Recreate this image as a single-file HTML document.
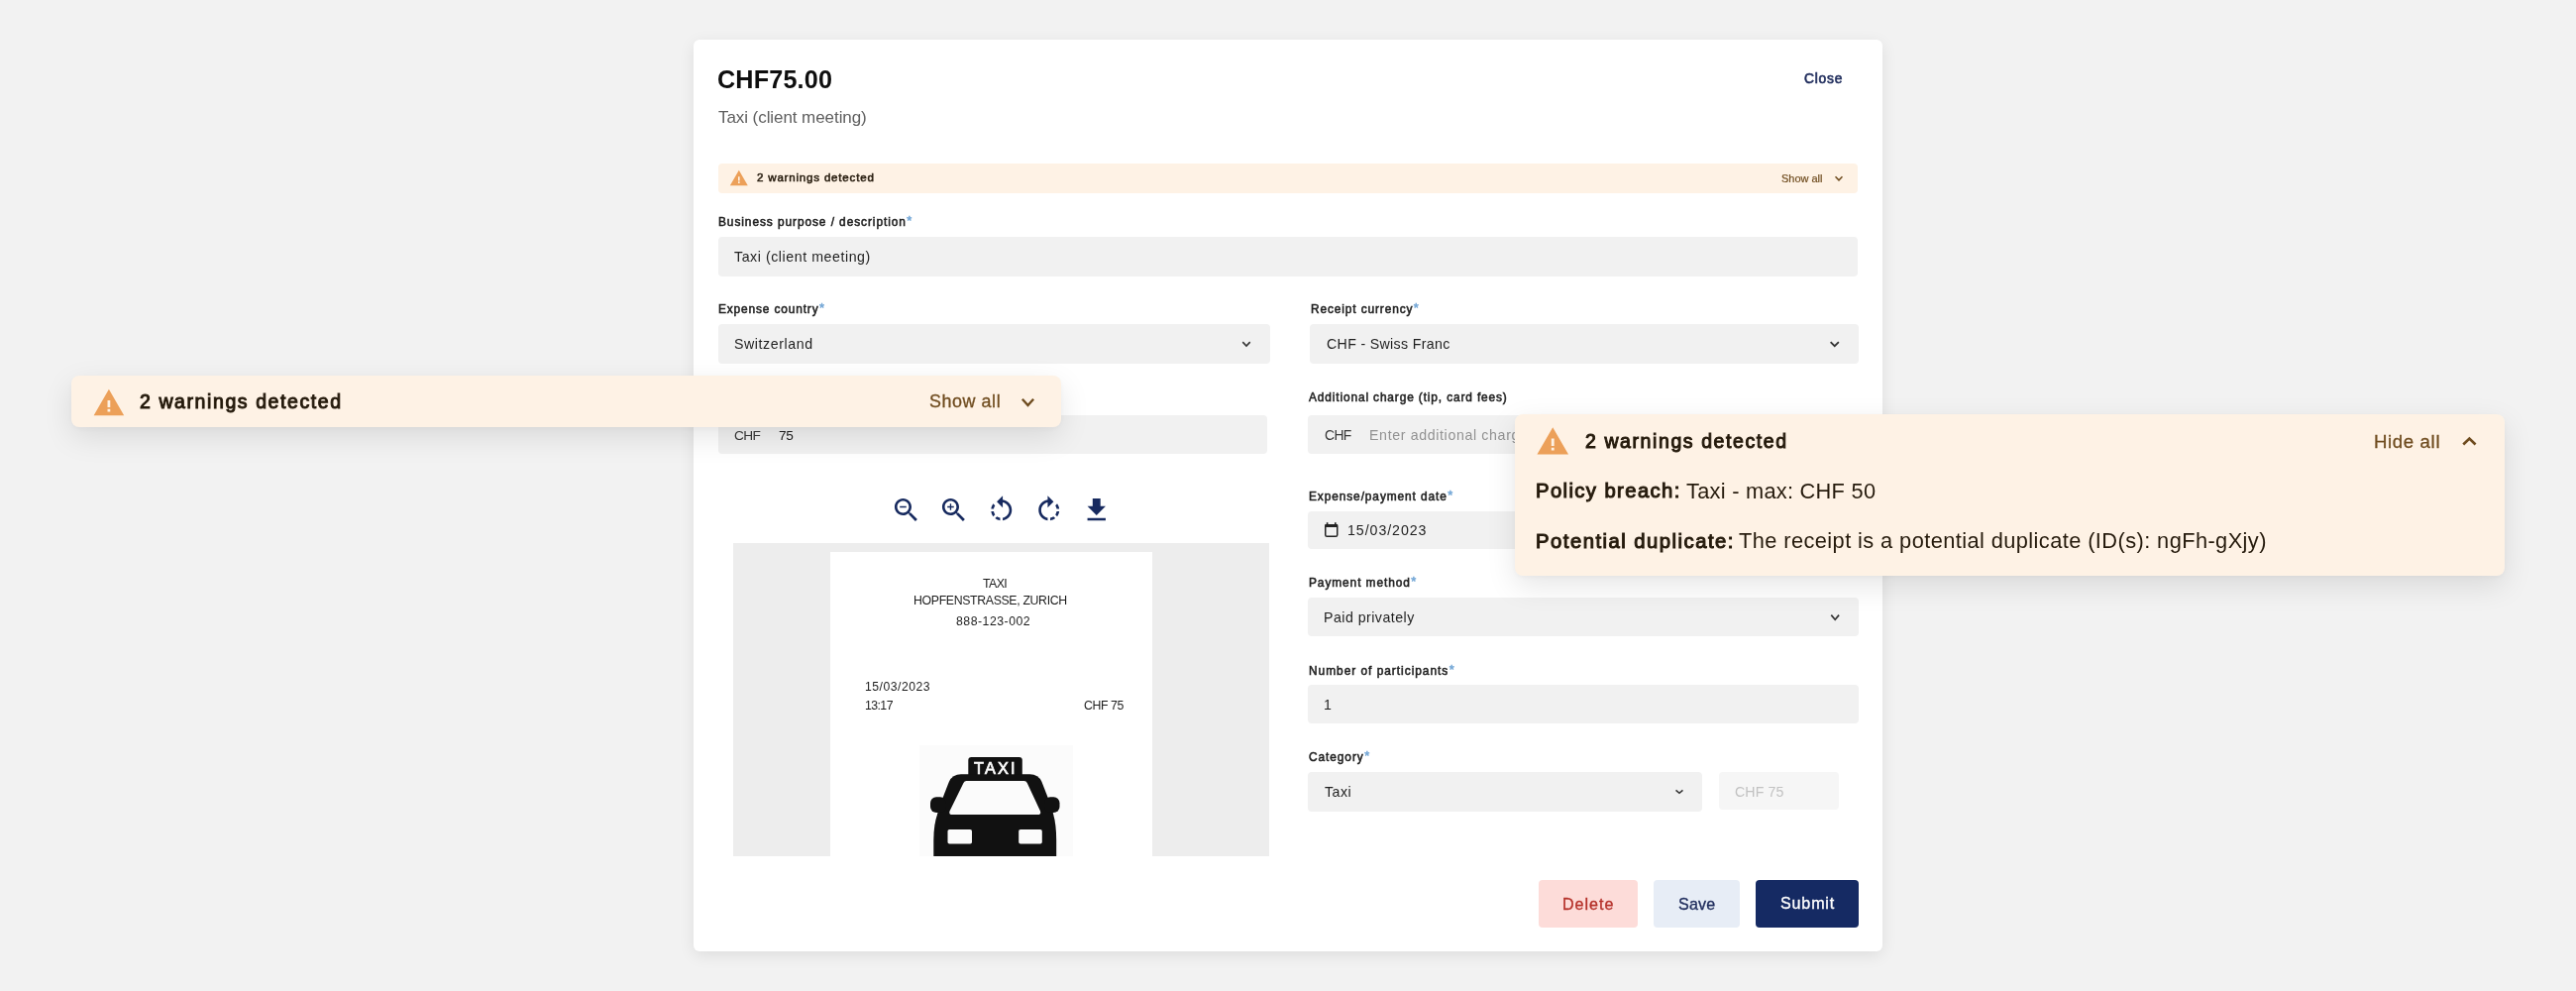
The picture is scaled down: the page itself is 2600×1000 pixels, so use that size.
<!DOCTYPE html>
<html><head><meta charset="utf-8"><style>
html,body{margin:0;padding:0;}
body{width:2600px;height:1000px;background:#f2f2f2;position:relative;overflow:hidden;font-family:"Liberation Sans",sans-serif;}
.t{position:absolute;white-space:nowrap;will-change:transform;}
.r{position:absolute;}
</style></head><body>
<div class="r" style="left:700px;top:40px;width:1200px;height:920px;background:#fff;border-radius:6px;box-shadow:0 4px 16px rgba(0,0,0,0.09)"></div>
<div class="t" style="left:724.00px;top:68.00px;font-size:25.2px;line-height:25.2px;font-weight:700;color:#0e0e0e;letter-spacing:0.157px;">CHF75.00</div>
<div class="t" style="left:725.00px;top:110.00px;font-size:17px;line-height:17px;color:#606060;letter-spacing:-0.07px;">Taxi (client meeting)</div>
<div class="t" style="left:1821.00px;top:73.00px;font-size:13.8px;line-height:13.8px;color:#1f2c5c;letter-spacing:0.77px;-webkit-text-stroke:0.62px #1f2c5c;">Close</div>
<div class="r" style="left:725px;top:164.5px;width:1150.00px;height:30.00px;background:#fef2e5;border-radius:4px;"></div>
<svg class="r" style="left:736.18px;top:170.37px;" width="19.64" height="19.58" viewBox="0 0 24 24"><path d="M1 21h22L12 2 1 21zm12-2.7h-2v-2h2v2zm0-3.1h-2v-5.2h2v5.2z" fill="#eca059"/></svg>
<div class="t" style="left:764.00px;top:173.00px;font-size:11.6px;line-height:11.6px;color:#251a0c;letter-spacing:0.782px;-webkit-text-stroke:0.52px #251a0c;">2 warnings detected</div>
<div class="t" style="left:1798.00px;top:175.00px;font-size:11px;line-height:11px;color:#6f4c1f;letter-spacing:-0.029px;-webkit-text-stroke:0.2px #6f4c1f;">Show all</div>
<svg class="r" style="left:0;top:0;overflow:visible" width="1" height="1"><polyline points="1852.53,178.23 1856.00,181.86 1859.47,178.23" fill="none" stroke="#6f4c1f" stroke-width="1.48" stroke-linejoin="miter" stroke-linecap="butt"/></svg>
<div class="t" style="left:725.00px;top:217.00px;font-size:11.9px;line-height:11.9px;color:#222222;letter-spacing:0.93px;-webkit-text-stroke:0.54px #222222;">Business purpose / description<span style="color:#74a7d6;-webkit-text-stroke:0.5px #74a7d6;letter-spacing:0;font-size:13px;vertical-align:1px;margin-left:0.5px">*</span></div>
<div class="r" style="left:725px;top:239px;width:1150.00px;height:39.50px;background:#f1f1f1;border-radius:4px;"></div>
<div class="t" style="left:741.00px;top:252.00px;font-size:14.2px;line-height:14.2px;color:#1f1f1f;letter-spacing:0.555px;">Taxi (client meeting)</div>
<div class="t" style="left:725.00px;top:305.00px;font-size:11.9px;line-height:11.9px;color:#222222;letter-spacing:0.861px;-webkit-text-stroke:0.54px #222222;">Expense country<span style="color:#74a7d6;-webkit-text-stroke:0.5px #74a7d6;letter-spacing:0;font-size:13px;vertical-align:1px;margin-left:0.5px">*</span></div>
<div class="r" style="left:725px;top:327px;width:556.50px;height:39.50px;background:#f1f1f1;border-radius:4px;"></div>
<div class="t" style="left:741.00px;top:340.00px;font-size:14.2px;line-height:14.2px;color:#1f1f1f;letter-spacing:0.58px;">Switzerland</div>
<svg class="r" style="left:0;top:0;overflow:visible" width="1" height="1"><polyline points="1254.27,345.17 1258.00,349.01 1261.73,345.17" fill="none" stroke="#333" stroke-width="1.59" stroke-linejoin="miter" stroke-linecap="butt"/></svg>
<div class="t" style="left:1323.00px;top:305.00px;font-size:11.9px;line-height:11.9px;color:#222222;letter-spacing:0.884px;-webkit-text-stroke:0.54px #222222;">Receipt currency<span style="color:#74a7d6;-webkit-text-stroke:0.5px #74a7d6;letter-spacing:0;font-size:13px;vertical-align:1px;margin-left:0.5px">*</span></div>
<div class="r" style="left:1322.3px;top:327px;width:553.70px;height:39.50px;background:#f1f1f1;border-radius:4px;"></div>
<div class="t" style="left:1339.00px;top:340.00px;font-size:14.2px;line-height:14.2px;color:#1f1f1f;letter-spacing:0.331px;">CHF - Swiss Franc</div>
<svg class="r" style="left:0;top:0;overflow:visible" width="1" height="1"><polyline points="1847.63,345.03 1851.75,349.24 1855.87,345.03" fill="none" stroke="#333" stroke-width="1.76" stroke-linejoin="miter" stroke-linecap="butt"/></svg>
<div class="r" style="left:725px;top:419.3px;width:553.60px;height:38.50px;background:#f1f1f1;border-radius:4px;"></div>
<div class="t" style="left:741.00px;top:433.00px;font-size:13.7px;line-height:13.7px;color:#383838;letter-spacing:-0.6px;">CHF</div>
<div class="t" style="left:786.00px;top:433.00px;font-size:13.7px;line-height:13.7px;color:#1f1f1f;letter-spacing:-0.3px;">75</div>
<div class="t" style="left:1321.00px;top:396.00px;font-size:11.9px;line-height:11.9px;color:#222222;letter-spacing:0.868px;-webkit-text-stroke:0.54px #222222;">Additional charge (tip, card fees)</div>
<div class="r" style="left:1320px;top:419.4px;width:556.00px;height:38.20px;background:#f1f1f1;border-radius:4px;"></div>
<div class="t" style="left:1337.00px;top:433.00px;font-size:13.9px;line-height:13.9px;color:#383838;letter-spacing:-0.6px;">CHF</div>
<div class="t" style="left:1382.00px;top:432.00px;font-size:14.2px;line-height:14.2px;color:#929292;letter-spacing:0.636px;">Enter additional charge</div>
<div class="t" style="left:1321.00px;top:494.00px;font-size:11.9px;line-height:11.9px;color:#222222;letter-spacing:0.908px;-webkit-text-stroke:0.54px #222222;">Expense/payment date<span style="color:#74a7d6;-webkit-text-stroke:0.5px #74a7d6;letter-spacing:0;font-size:13px;vertical-align:1px;margin-left:0.5px">*</span></div>
<div class="r" style="left:1320px;top:515.7px;width:556.00px;height:37.90px;background:#f1f1f1;border-radius:4px;"></div>
<svg class="r" style="left:1336.40px;top:526.80px;" width="16.00" height="16.00" viewBox="0 0 16 16"><rect x="1.75" y="2.85" width="12" height="11.4" rx="1.6" fill="none" stroke="#222" stroke-width="1.5"/><rect x="1.2" y="2.1" width="13.1" height="2.8" rx="0.8" fill="#222"/><rect x="2.8" y="0.2" width="1.6" height="2.4" fill="#222"/><rect x="11.0" y="0.2" width="1.6" height="2.4" fill="#222"/></svg>
<div class="t" style="left:1360.00px;top:528.00px;font-size:14.2px;line-height:14.2px;color:#1f1f1f;letter-spacing:0.944px;">15/03/2023</div>
<div class="t" style="left:1321.00px;top:581.00px;font-size:11.9px;line-height:11.9px;color:#222222;letter-spacing:0.92px;-webkit-text-stroke:0.54px #222222;">Payment method<span style="color:#74a7d6;-webkit-text-stroke:0.5px #74a7d6;letter-spacing:0;font-size:13px;vertical-align:1px;margin-left:0.5px">*</span></div>
<div class="r" style="left:1320px;top:603.3px;width:556.40px;height:38.50px;background:#f1f1f1;border-radius:4px;"></div>
<div class="t" style="left:1336.00px;top:616.00px;font-size:14.2px;line-height:14.2px;color:#1f1f1f;letter-spacing:0.469px;">Paid privately</div>
<svg class="r" style="left:0;top:0;overflow:visible" width="1" height="1"><polyline points="1848.30,620.60 1852.20,625.18 1856.10,620.60" fill="none" stroke="#333" stroke-width="1.67" stroke-linejoin="miter" stroke-linecap="butt"/></svg>
<div class="t" style="left:1321.00px;top:670.00px;font-size:11.9px;line-height:11.9px;color:#222222;letter-spacing:0.984px;-webkit-text-stroke:0.54px #222222;">Number of participants<span style="color:#74a7d6;-webkit-text-stroke:0.5px #74a7d6;letter-spacing:0;font-size:13px;vertical-align:1px;margin-left:0.5px">*</span></div>
<div class="r" style="left:1320px;top:691.2px;width:556.40px;height:39.00px;background:#f1f1f1;border-radius:4px;"></div>
<div class="t" style="left:1336.00px;top:704.00px;font-size:14.2px;line-height:14.2px;color:#1f1f1f;">1</div>
<div class="t" style="left:1321.00px;top:757.00px;font-size:11.9px;line-height:11.9px;color:#222222;letter-spacing:0.923px;-webkit-text-stroke:0.54px #222222;">Category<span style="color:#74a7d6;-webkit-text-stroke:0.5px #74a7d6;letter-spacing:0;font-size:13px;vertical-align:1px;margin-left:0.5px">*</span></div>
<div class="r" style="left:1320px;top:779.2px;width:398.20px;height:39.80px;background:#f1f1f1;border-radius:4px;"></div>
<div class="t" style="left:1337.00px;top:792.00px;font-size:14.2px;line-height:14.2px;color:#1f1f1f;letter-spacing:0.5px;">Taxi</div>
<svg class="r" style="left:0;top:0;overflow:visible" width="1" height="1"><polyline points="1691.53,797.33 1695.00,800.36 1698.47,797.33" fill="none" stroke="#333" stroke-width="1.48" stroke-linejoin="miter" stroke-linecap="butt"/></svg>
<div class="r" style="left:1735px;top:779.1px;width:121.00px;height:38.40px;background:#f6f6f6;border-radius:4px;"></div>
<div class="t" style="left:1751.00px;top:792.00px;font-size:14.2px;line-height:14.2px;color:#c2c2c2;letter-spacing:0.1px;">CHF 75</div>
<div class="r" style="left:1553.3px;top:888.2px;width:99.60px;height:47.50px;background:#fddcd9;border-radius:4px;"></div>
<div class="t" style="left:1577.00px;top:904.00px;font-size:16.1px;line-height:16.1px;color:#b5312a;letter-spacing:0.99px;-webkit-text-stroke:0.35px #b5312a;">Delete</div>
<div class="r" style="left:1669.3px;top:888.2px;width:86.60px;height:47.50px;background:#e7edf6;border-radius:4px;"></div>
<div class="t" style="left:1694.00px;top:904.00px;font-size:16.1px;line-height:16.1px;color:#1f2c5c;letter-spacing:0.15px;-webkit-text-stroke:0.35px #1f2c5c;">Save</div>
<div class="r" style="left:1772px;top:888.2px;width:103.80px;height:47.50px;background:#152a63;border-radius:4px;"></div>
<div class="t" style="left:1797.00px;top:903.00px;font-size:16.1px;line-height:16.1px;color:#ffffff;letter-spacing:0.83px;-webkit-text-stroke:0.35px #ffffff;">Submit</div>
<svg class="r" style="left:898.80px;top:499.00px;" width="31.50" height="31.50" viewBox="0 0 24 24"><path d="M15.5 14h-.79l-.28-.27C15.41 12.59 16 11.11 16 9.5 16 5.91 13.09 3 9.5 3S3 5.91 3 9.5 5.91 16 9.5 16c1.61 0 3.09-.59 4.23-1.57l.27.28v.79l5 4.99L20.49 19l-4.99-5zm-6 0C7.01 14 5 11.990 5 9.5S7.01 5 9.5 5 14 7.01 14 9.5 11.99 14 9.5 14zM7 9h5v1H7z" fill="#172a5f"/></svg>
<svg class="r" style="left:946.80px;top:499.00px;" width="31.50" height="31.50" viewBox="0 0 24 24"><path d="M15.5 14h-.79l-.28-.27C15.41 12.59 16 11.11 16 9.5 16 5.91 13.09 3 9.5 3S3 5.91 3 9.5 5.91 16 9.5 16c1.61 0 3.09-.59 4.23-1.57l.27.28v.79l5 4.99L20.49 19l-4.99-5zm-6 0C7.01 14 5 11.99 5 9.5S7.01 5 9.5 5 14 7.01 14 9.5 11.99 14 9.5 14zm2.5-4h-2v2H9v-2H7V9h2V7h1v2h2v1z" fill="#172a5f"/></svg>
<svg class="r" style="left:994.80px;top:499.00px;" width="31.50" height="31.50" viewBox="0 0 24 24"><path d="M7.11 8.53L5.7 7.11C4.8 8.27 4.24 9.61 4.07 11h2.02c.14-.87.49-1.72 1.02-2.47zM6.09 13H4.07c.17 1.39.72 2.73 1.62 3.89l1.41-1.42c-.52-.75-.87-1.59-1.01-2.47zm1.01 5.32c1.16.9 2.51 1.44 3.9 1.61V17.9c-.87-.15-1.71-.49-2.46-1.03L7.1 18.32zM13 4.07V1L8.45 5.55 13 10V6.09c2.84.48 5 2.94 5 5.91s-2.16 5.43-5 5.91v2.02c3.95-.49 7-3.85 7-7.93s-3.05-7.44-7-7.93z" fill="#172a5f"/></svg>
<svg class="r" style="left:1042.80px;top:499.00px;" width="31.50" height="31.50" viewBox="0 0 24 24"><path d="M15.55 5.55L11 1v3.07C7.06 4.56 4 7.92 4 12s3.05 7.44 7 7.93v-2.02c-2.84-.48-5-2.94-5-5.91s2.16-5.43 5-5.91V10l4.55-4.45zM19.93 11c-.17-1.39-.72-2.73-1.62-3.89l-1.42 1.42c.54.75.88 1.6 1.02 2.47h2.02zM13 17.9v2.02c1.39-.17 2.74-.71 3.9-1.61l-1.44-1.44c-.75.54-1.59.89-2.46 1.03zm3.89-2.42l1.42 1.41c.9-1.16 1.45-2.5 1.62-3.89h-2.02c-.14.87-.48 1.72-1.02 2.48z" fill="#172a5f"/></svg>
<svg class="r" style="left:1090.80px;top:499.00px;" width="31.50" height="31.50" viewBox="0 0 24 24"><path d="M19 9h-4V3H9v6H5l7 7 7-7zM5 18v2h14v-2H5z" fill="#172a5f"/></svg>
<div class="r" style="left:739.5px;top:548px;width:541.00px;height:316.00px;background:#ededed;border-radius:0px;"></div>
<div class="r" style="left:838px;top:557.3px;width:325.00px;height:306.70px;background:#ffffff;border-radius:0px;"></div>
<div class="t" style="left:992.00px;top:583.00px;font-size:12.4px;line-height:12.4px;color:#1c1c1c;letter-spacing:-0.633px;">TAXI</div>
<div class="t" style="left:922.00px;top:600.00px;font-size:12.3px;line-height:12.3px;color:#1c1c1c;letter-spacing:-0.34px;">HOPFENSTRASSE, ZURICH</div>
<div class="t" style="left:965.00px;top:621.00px;font-size:12.3px;line-height:12.3px;color:#1c1c1c;letter-spacing:0.49px;">888-123-002</div>
<div class="t" style="left:873.00px;top:687.00px;font-size:12.2px;line-height:12.2px;color:#1c1c1c;letter-spacing:0.5px;">15/03/2023</div>
<div class="t" style="left:873.00px;top:706.00px;font-size:12.3px;line-height:12.3px;color:#1c1c1c;letter-spacing:-0.575px;">13:17</div>
<div class="t" style="left:1094.00px;top:706.00px;font-size:12.3px;line-height:12.3px;color:#1c1c1c;letter-spacing:-0.4px;">CHF 75</div>
<div class="r" style="left:928px;top:752px;width:155.00px;height:112.00px;background:#fbfbfb;border-radius:0px;"></div>
<svg class="r" style="left:0;top:0" width="2600" height="1000" viewBox="0 0 2600 1000">
<path fill="#111" d="M980.5 763.9 H1028.6 Q1031.8 763.9 1031.8 767.1 V782 H977.3 V767.1 Q977.3 763.9 980.5 763.9z"/>
<path fill="#111" d="M970 781.3 H1039.5 Q1048 781.3 1051.5 789 L1062 816 Q1063 819 1063 822 H946.3 Q946.3 819 947.3 816 L957.8 789 Q961.3 781.3 970 781.3z"/>
<path fill="#111" d="M946.3 821 H1063 Q1066.2 832 1066.2 848 V864 H942.3 V848 Q942.3 832 946.3 821z"/>
<rect x="939" y="804.3" width="16" height="15.7" rx="6" fill="#111"/>
<rect x="1054" y="804.3" width="15.5" height="15.7" rx="6" fill="#111"/>
<path fill="#fbfbfb" d="M975.5 787.9 H1033.7 Q1035.8 787.9 1036.7 790 L1050 818.5 Q1051 822 1047.5 822 H961 Q957.5 822 958.5 818.5 L972.5 790 Q973.4 787.9 975.5 787.9z"/>
<rect x="956.5" y="837" width="24.5" height="14.5" rx="1.8" fill="#fbfbfb"/>
<rect x="1028.2" y="837" width="23.6" height="14.5" rx="1.8" fill="#fbfbfb"/>
</svg>
<div class="t" style="left:983.00px;top:767.00px;font-size:16.3px;line-height:16.3px;color:#fbfbfb;letter-spacing:2.157px;-webkit-text-stroke:0.73px #fbfbfb;">TAXI</div>
<div class="r" style="left:71.5px;top:379px;width:999.00px;height:52.00px;background:#fef2e5;border-radius:8px;box-shadow:0 10px 30px rgba(0,0,0,0.10),0 2px 6px rgba(0,0,0,0.04);"></div>
<svg class="r" style="left:92.59px;top:389.52px;" width="33.82" height="33.35" viewBox="0 0 24 24"><path d="M1 21h22L12 2 1 21zm12-2.7h-2v-2h2v2zm0-3.1h-2v-5.2h2v5.2z" fill="#eca059"/></svg>
<div class="t" style="left:141.00px;top:396.00px;font-size:19.5px;line-height:19.5px;color:#251a0c;letter-spacing:1.584px;-webkit-text-stroke:0.98px #251a0c;">2 warnings detected</div>
<div class="t" style="left:938.00px;top:397.00px;font-size:17.9px;line-height:17.9px;color:#6f4c1f;letter-spacing:0.571px;-webkit-text-stroke:0.3px #6f4c1f;">Show all</div>
<svg class="r" style="left:0;top:0;overflow:visible" width="1" height="1"><polyline points="1031.87,402.77 1037.50,408.96 1043.13,402.77" fill="none" stroke="#6f4c1f" stroke-width="2.40" stroke-linejoin="miter" stroke-linecap="butt"/></svg>
<div class="r" style="left:1528.6px;top:418px;width:999.40px;height:163.00px;background:#fef2e5;border-radius:8px;box-shadow:0 10px 30px rgba(0,0,0,0.10),0 2px 6px rgba(0,0,0,0.04);"></div>
<svg class="r" style="left:1549.96px;top:428.38px;" width="34.47" height="34.99" viewBox="0 0 24 24"><path d="M1 21h22L12 2 1 21zm12-2.7h-2v-2h2v2zm0-3.1h-2v-5.2h2v5.2z" fill="#eca059"/></svg>
<div class="t" style="left:1600.00px;top:436.00px;font-size:19.5px;line-height:19.5px;color:#251a0c;letter-spacing:1.584px;-webkit-text-stroke:0.98px #251a0c;">2 warnings detected</div>
<div class="t" style="left:2396.00px;top:437.00px;font-size:18.6px;line-height:18.6px;color:#6f4c1f;letter-spacing:0.643px;-webkit-text-stroke:0.3px #6f4c1f;">Hide all</div>
<svg class="r" style="left:0;top:0;overflow:visible" width="1" height="1"><polyline points="2486.25,448.55 2492.40,442.53 2498.55,448.55" fill="none" stroke="#6f4c1f" stroke-width="2.63" stroke-linejoin="miter" stroke-linecap="butt"/></svg>
<div class="t" style="left:1550.00px;top:485.00px;font-size:20.3px;line-height:20.3px;color:#251a0c;letter-spacing:1.383px;-webkit-text-stroke:1.02px #251a0c;">Policy breach:</div>
<div class="t" style="left:1702.00px;top:485.00px;font-size:21.8px;line-height:21.8px;color:#251a0c;letter-spacing:0.265px;">Taxi - max: CHF 50</div>
<div class="t" style="left:1550.00px;top:536.00px;font-size:20.3px;line-height:20.3px;color:#251a0c;letter-spacing:1.478px;-webkit-text-stroke:1.02px #251a0c;">Potential duplicate:</div>
<div class="t" style="left:1755.00px;top:535.00px;font-size:21.8px;line-height:21.8px;color:#251a0c;letter-spacing:0.415px;">The receipt is a potential duplicate (ID(s): ngFh-gXjy)</div>
</body></html>
